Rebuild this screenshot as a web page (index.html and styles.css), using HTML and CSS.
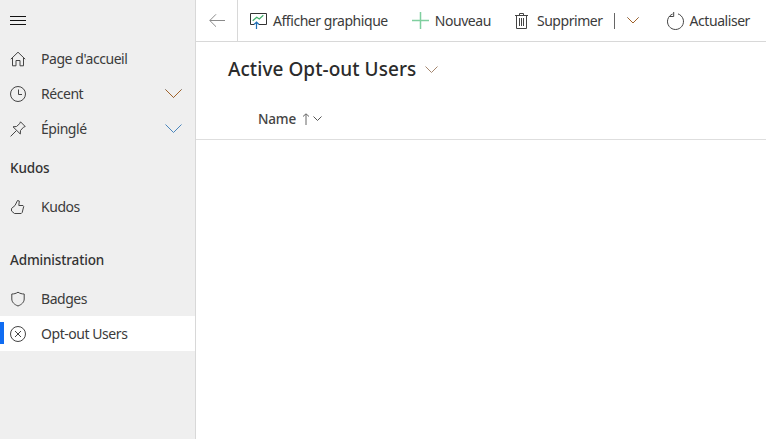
FILE: index.html
```html
<!DOCTYPE html>
<html lang="fr">
<head>
  <meta charset="UTF-8">
  <meta name="viewport" content="width=device-width, initial-scale=1.0">
  <title>Active Opt-out Users</title>
  <link rel="stylesheet" href="styles.css">
</head>
<body>
  <div class="app">

    <!-- Left navigation -->
    <nav class="sidebar">
      <div class="nav-toggle">
        <svg class="icon-menu" width="16" height="10" viewBox="0 0 16 10"><path d="M0 .5h16M0 4.500h16M0 8.500h16"/></svg>
      </div>

      <a class="nav-item">
        <svg class="nav-icon" width="16" height="16" viewBox="0 0 16 16"><path d="M.8 8.200 8 1.200l7.200 7M2.500 6.800v8h3.500V9.500h4v5.300h3.500V6.800"/></svg>
        <span class="nav-label">Page d'accueil</span>
      </a>
      <a class="nav-item">
        <svg class="nav-icon" width="16" height="16" viewBox="0 0 16 16"><circle cx="8" cy="8" r="7.500"/><path d="M8.500 3.500v5h3.500"/></svg>
        <span class="nav-label">Récent</span>
        <svg class="nav-chevron" width="17" height="9" viewBox="0 0 17 9"><path d="m.5.500 8 8 8-8"/></svg>
      </a>
      <a class="nav-item">
        <svg class="nav-icon" width="16" height="16" viewBox="0 0 16 16"><path d="M10.500 .8 15.200 5.500 13.500 6.200 10.500 9.500 10.300 13 3 5.800 6.500 5.500 9.800 2.500ZM6.300 9.700.6 15.400"/></svg>
        <span class="nav-label">Épinglé</span>
        <svg class="nav-chevron nav-chevron-blue" width="17" height="9" viewBox="0 0 17 9"><path d="m.5.500 8 8 8-8"/></svg>
      </a>

      <div class="nav-heading">Kudos</div>
      <a class="nav-item">
        <svg class="nav-icon" width="16" height="16" viewBox="0 0 16 16"><path d="M1.500 9.500 5 6.500 7.500 1.500 9.300 2 8.800 6.500h4.200l.7 1-1.500 6-1 1H4.500L1.500 12Z"/></svg>
        <span class="nav-label">Kudos</span>
      </a>

      <div class="nav-heading nav-heading-spaced">Administration</div>
      <a class="nav-item">
        <svg class="nav-icon" width="16" height="16" viewBox="0 0 16 16"><path d="M8 1.200c2 1.300 4 1.800 6.200 1.800v5c0 3.200-2.500 5.500-6.200 7-3.700-1.500-6.200-3.800-6.200-7V3C4 3 6 2.500 8 1.200Z"/></svg>
        <span class="nav-label">Badges</span>
      </a>
      <a class="nav-item active">
        <svg class="nav-icon" width="16" height="16" viewBox="0 0 16 16"><circle cx="8" cy="8" r="7.500"/><path d="m5 5 6 6M11 5l-6 6"/></svg>
        <span class="nav-label">Opt-out Users</span>
      </a>
    </nav>

    <div class="content">

      <!-- Command bar -->
      <div class="commandbar">
        <button class="back-btn">
          <svg class="cmd-icon" width="16" height="15" viewBox="0 0 16 15"><path d="M7 1.300.8 7.500 7 13.700M.8 7.500H16"/></svg>
        </button>

        <button class="cmd-btn btn-chart">
          <svg width="17" height="17" viewBox="0 0 17 17">
            <path class="chart-frame" d="M4 12.500H.5V1.500h16v11H9"/>
            <path class="chart-line" d="m2.700 8.700 4-3.400 2.600 1.700 4-3.700"/>
            <path class="chart-arrow" d="M6.500 17v-7M4 12.500 6.500 10 9 12.500"/>
          </svg>
          Afficher graphique
        </button>

        <button class="cmd-btn btn-new">
          <svg class="icon-plus" width="17" height="17" viewBox="0 0 17 17"><path d="M8.500 0v17M0 8.500h17"/></svg>
          Nouveau
        </button>

        <button class="cmd-btn btn-delete">
          <svg class="cmd-icon" width="13" height="17" viewBox="0 0 13 17"><path d="M0 3.500h13M4.500 3.500v-2h4v2M1.500 3.500v13h10v-13M4.500 6v8M6.500 6v8M8.500 6v8"/></svg>
          Supprimer
        </button>
        <span class="cmd-sep"></span>
        <svg class="cmd-chevron" width="12" height="7" viewBox="0 0 12 7"><path d="m.5.500 5.500 5.500 5.500-5.500"/></svg>

        <button class="cmd-btn btn-refresh">
          <svg class="cmd-icon" width="17" height="19" viewBox="0 0 17 19"><path d="M11 2.900A8 8 0 1 1 5.700 3M6.700 1v4.500H2.200"/></svg>
          Actualiser
        </button>
      </div>

      <!-- View -->
      <div class="view-title">
        <h1>Active Opt-out Users</h1>
        <svg class="title-chevron" width="13" height="7" viewBox="0 0 13 7"><path d="m.5.500 6 6 6-6"/></svg>
      </div>

      <div class="grid-header">
        <span class="col-name">Name</span>
        <svg class="sort-arrow" width="8" height="12" viewBox="0 0 8 12"><path d="M4 12V1M1 3.500 4 .8l3 2.700"/></svg>
        <svg class="col-chevron" width="9" height="5" viewBox="0 0 9 5"><path d="m.5.500 4 4 4-4"/></svg>
      </div>
    </div>

  </div>
</body>
</html>
```

FILE: styles.css
```css
* {
  box-sizing: border-box;
}

html,
body {
  height: 100%;
}

body {
  margin: 0;
  font-family: "Noto Sans", "Open Sans", Arial, sans-serif;
  font-size: 14px;
  color: #333;
  background-color: white;
  overflow: hidden;
}

svg {
  display: block;
  flex: none;
  fill: none;
  stroke-width: 1;
}

.app {
  display: flex;
  height: 100%;
}

/* Sidebar */
.sidebar {
  width: 196px;
  flex: none;
  background-color: #efefef;
  border-right: 1px solid #d8d8d8;
}

.nav-toggle {
  height: 41px;
  padding-left: 10px;
  display: flex;
  align-items: center;
}

.icon-menu {
  stroke: #111;
}

.nav-item {
  height: 35px;
  display: flex;
  align-items: center;
  padding: 0 13px 0 10px;
  color: #3b3b3b;
  position: relative;
}

.nav-icon {
  stroke: #444;
}

.nav-label {
  margin-left: 15px;
  flex: 1;
  letter-spacing: -0.45px;
}

.nav-chevron {
  stroke: #a0622a;
  filter: drop-shadow(0.6px 0 0 #3f86c8);
}

.nav-chevron-blue {
  stroke: #4a86bd;
  filter: none;
}

.nav-item.active {
  background-color: white;
}

.nav-item.active::before {
  content: "";
  position: absolute;
  left: 0;
  top: 6px;
  width: 4px;
  height: 22px;
  background-color: #0f6cf2;
}

.nav-heading {
  height: 43px;
  display: flex;
  align-items: center;
  padding-left: 10px;
  font-weight: 500;
  font-size: 13.5px;
  letter-spacing: -0.15px;
  color: #333;
}

.nav-heading-spaced {
  margin-top: 14px;
}

/* Command bar */
.content {
  flex: 1;
  min-width: 0;
}

.commandbar {
  height: 42px;
  display: flex;
  align-items: center;
  border-bottom: 1px solid #d8d8d8;
}

.commandbar button {
  font: inherit;
  letter-spacing: -0.45px;
  color: #3b3b3b;
  background: none;
  border: none;
  padding: 0;
  display: flex;
  align-items: center;
  white-space: nowrap;
}

.commandbar .back-btn {
  width: 42px;
  height: 41px;
  justify-content: center;
  border-right: 1px solid #d8d8d8;
  flex: none;
}

.back-btn .cmd-icon {
  stroke: #8a8a8a;
}

.cmd-icon {
  stroke: #444;
}

.btn-chart {
  margin-left: 12px;
  gap: 6px;
}

.chart-frame {
  stroke: #333;
}

.chart-line {
  stroke: #3fae6a;
  stroke-width: 1.2;
}

.chart-arrow {
  stroke: #1f6fb5;
  stroke-width: 1.2;
}

.btn-new {
  margin-left: 24px;
  gap: 6px;
}

.icon-plus {
  stroke: #7fcf9f;
  stroke-width: 1.5;
}

.btn-delete {
  margin-left: 24px;
  gap: 9px;
}

.cmd-sep {
  width: 1px;
  height: 16px;
  background-color: #666;
  margin-left: 11px;
}

.cmd-chevron {
  stroke: #a0622a;
  filter: drop-shadow(0.6px 0 0 #3f86c8);
  margin-left: 12px;
}

.btn-refresh {
  margin-left: 28px;
  gap: 6px;
}

/* View header */
.view-title {
  height: 56px;
  display: flex;
  align-items: center;
  padding: 0 0 2px 32px;
}

.view-title h1 {
  margin: 0;
  font-size: 19px;
  font-weight: 500;
  letter-spacing: 0.05px;
  color: #2b2b2b;
}

.title-chevron {
  stroke: #a5866e;
  margin-left: 9px;
}

.grid-header {
  height: 42px;
  display: flex;
  align-items: center;
  padding-left: 62px;
  border-bottom: 1px solid #dedede;
}

.col-name {
  font-weight: 500;
  font-size: 13.5px;
  letter-spacing: -0.2px;
  color: #444;
}

.sort-arrow {
  stroke: #666;
  margin-left: 6px;
}

.col-chevron {
  stroke: #555;
  margin-left: 3px;
}
```
